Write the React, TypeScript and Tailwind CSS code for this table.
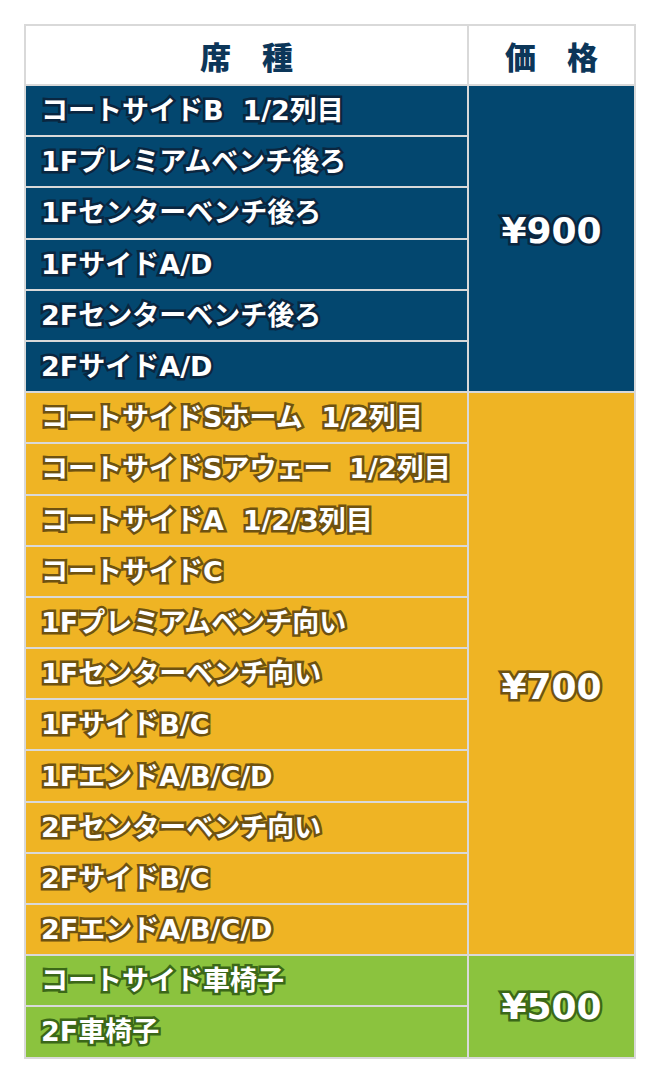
import React from 'react'

type Group = {
  price: string
  bg: string
  outline: string
  priceAdj: string
  seats: string[]
}

const groups: Group[] = [
  {
    price: '¥900',
    bg: 'bg-[#03476f]',
    outline: '[-webkit-text-stroke:5px_#0a2640]',
    priceAdj: 'pb-[16px]',
    seats: [
      'コートサイドB  1/2列目',
      '1Fプレミアムベンチ後ろ',
      '1Fセンターベンチ後ろ',
      '1FサイドA/D',
      '2Fセンターベンチ後ろ',
      '2FサイドA/D',
    ],
  },
  {
    price: '¥700',
    bg: 'bg-[#efb424]',
    outline: '[-webkit-text-stroke:5px_#6e5211]',
    priceAdj: 'pt-[26px]',
    seats: [
      'コートサイドSホーム  1/2列目',
      'コートサイドSアウェー  1/2列目',
      'コートサイドA  1/2/3列目',
      'コートサイドC',
      '1Fプレミアムベンチ向い',
      '1Fセンターベンチ向い',
      '1FサイドB/C',
      '1FエンドA/B/C/D',
      '2Fセンターベンチ向い',
      '2FサイドB/C',
      '2FエンドA/B/C/D',
    ],
  },
  {
    price: '¥500',
    bg: 'bg-[#8bc33e]',
    outline: '[-webkit-text-stroke:5px_#3b6818]',
    priceAdj: 'pt-[2px]',
    seats: ['コートサイド車椅子', '2F車椅子'],
  },
]

export default function App() {
  return (
    <div className="min-h-screen bg-white pt-[24px] pl-[24px] font-['DejaVu_Sans','Noto_Sans_CJK_JP',sans-serif]">
      <table className="w-[612px] border-collapse border-2 border-[#d9d9d9]">
        <thead>
          <tr className="h-[60px] bg-white">
            <th className="w-[443px] border-2 border-[#d9d9d9] text-[31px] font-black text-[#0c3659] leading-none font-['Noto_Sans_CJK_JP',sans-serif]">
              席　種
            </th>
            <th className="border-2 border-[#d9d9d9] text-[31px] font-black text-[#0c3659] leading-none font-['Noto_Sans_CJK_JP',sans-serif]">
              価　格
            </th>
          </tr>
        </thead>
        <tbody>
          {groups.map(g =>
            g.seats.map((s, i) => (
              <tr key={s} className={`h-[51.2px] ${g.bg}`}>
                <td className={`border-2 border-[#d9d9d9] pl-[15px] text-left text-[27px] font-bold text-white leading-none whitespace-pre [paint-order:stroke_fill] ${g.outline}`}>
                  {s}
                </td>
                {i === 0 && (
                  <td
                    rowSpan={g.seats.length}
                    className={`border-2 border-[#d9d9d9] text-center text-[36px] font-bold text-white leading-none [paint-order:stroke_fill] ${g.outline} ${g.priceAdj}`}
                  >
                    {g.price}
                  </td>
                )}
              </tr>
            ))
          )}
        </tbody>
      </table>
    </div>
  )
}
